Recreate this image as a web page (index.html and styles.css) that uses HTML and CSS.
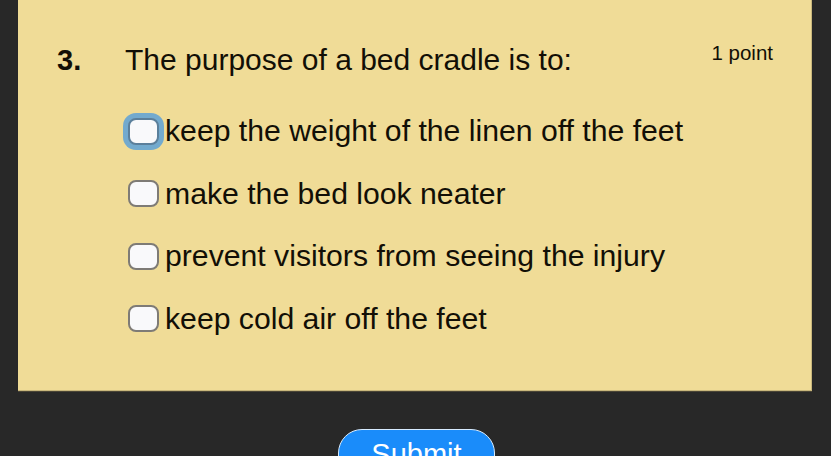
FILE: index.html
```html
<!DOCTYPE html>
<html>
<head>
<meta charset="utf-8">
<link rel="stylesheet" href="styles.css">
</head>
<body>
<div class="page">
  <div class="card">
    <div class="question">
      <span class="num">3.</span>
      <span class="qtext">The purpose of a bed cradle is to:</span>
      <span class="points">1 point</span>
    </div>
    <div class="options">
      <label class="option"><span class="box focused"></span><span class="otext">keep the weight of the linen off the feet</span></label>
      <label class="option"><span class="box"></span><span class="otext">make the bed look neater</span></label>
      <label class="option"><span class="box"></span><span class="otext">prevent visitors from seeing the injury</span></label>
      <label class="option"><span class="box"></span><span class="otext">keep cold air off the feet</span></label>
    </div>
  </div>
  <div class="actions">
    <button class="submit">Submit</button>
  </div>
</div>
</body>
</html>
```
FILE: styles.css
```css
html, body {
  margin: 0;
  padding: 0;
  background: #282828;
  overflow: hidden;
}
.page {
  width: 831px;
  height: 456px;
  overflow: hidden;
  font-family: "Liberation Sans", Arial, sans-serif;
  color: #120f06;
}
.card {
  margin-left: 18px;
  width: 794px;
  height: 391px;
  box-sizing: border-box;
  background: #f0dc97;
  border-right: 1px solid #c9b77c;
  border-bottom: 1px solid #c9b77c;
  box-shadow: 0 1px 0 #4a4536;
  padding-top: 40px;
}
.question {
  display: flex;
  align-items: flex-start;
  height: 40px;
  padding-left: 39px;
  padding-right: 38px;
}
.num {
  font-weight: bold;
  font-size: 29px;
  line-height: 40px;
  width: 68px;
}
.qtext {
  font-size: 30px;
  line-height: 40px;
  flex: 1;
}
.points {
  font-size: 20.5px;
  line-height: 26px;
}
.options {
  display: flex;
  flex-direction: column;
  padding-left: 110px;
  margin-top: 20px;
}
.option {
  display: flex;
  align-items: center;
  height: 62.5px;
  gap: 6px;
}
.box {
  width: 31px;
  height: 27px;
  box-sizing: border-box;
  border: 2.5px solid #7e7b76;
  border-radius: 8px;
  background: #f9f9fb;
}
.box.focused {
  border-color: #5b7f9b;
  box-shadow: 0 0 0 5px #73aace;
}
.otext {
  font-size: 30.2px;
}
.actions {
  display: flex;
  justify-content: center;
  padding-top: 38px;
  padding-left: 2px;
}
.submit {
  width: 157px;
  height: 56px;
  border: 1.5px solid #d8ecff;
  border-radius: 24px;
  background: #1a8cfa;
  color: #fff;
  font-family: "Liberation Sans", Arial, sans-serif;
  font-size: 29px;
  line-height: 32px;
  padding: 8px 0 0;
  display: flex;
  justify-content: center;
  align-items: flex-start;
}
```
